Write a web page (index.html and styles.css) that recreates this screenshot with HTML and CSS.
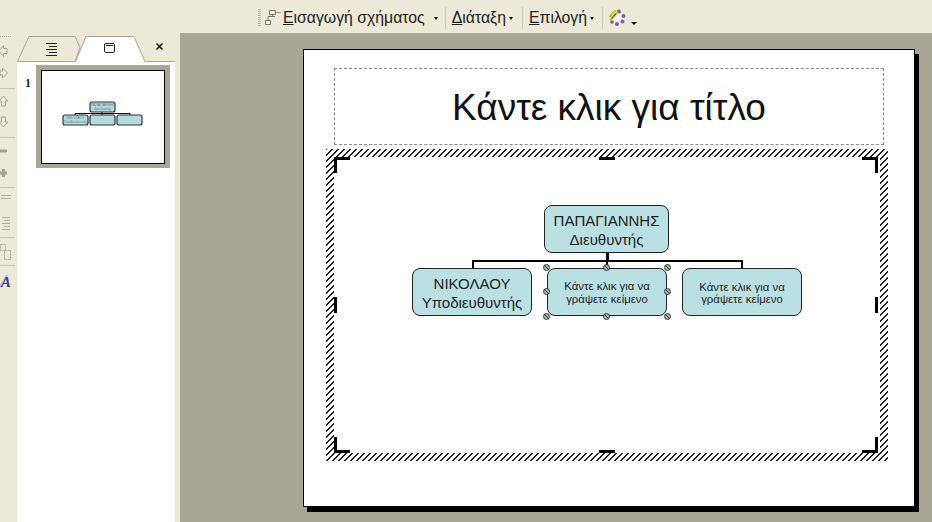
FILE: index.html
```html
<!DOCTYPE html>
<html lang="el">
<head>
    <meta charset="UTF-8">
    <title>Οργανόγραμμα</title>
    <link rel="stylesheet" href="styles.css">
</head>
<body>
    <div class="toolbar">
        <span class="grip"></span>
        <svg class="tb-icon" width="16" height="18" viewBox="0 0 16 18">
            <path d="M4.500 1.500h6v4h-6zM0.500 11.500h5v4h-5zM7.500 5.500v2M3 11V7.500h7" fill="#f4f2e6" stroke="#77756a"/>
            <path d="M11 3.500h5" stroke="#9a9888"/>
        </svg>
        <span class="tb-item wide"><u>Ε</u>ισαγωγή σχήματος<i class="caret far"></i></span>
        <span class="tb-sep"></span>
        <span class="tb-item arrange"><u>Δ</u>ιάταξη<i class="caret"></i></span>
        <span class="tb-sep"></span>
        <span class="tb-item"><u>Ε</u>πιλογή<i class="caret"></i></span>
        <span class="tb-sep"></span>
        <svg class="tb-icon cycle" width="18" height="18" viewBox="0 0 18 18">
            <circle cx="9.500" cy="8.500" r="6.500" fill="#f3f1f6"/>
            <g fill="#7d5f92">
                <circle cx="11" cy="2.500" r="2"/>
                <circle cx="15.500" cy="7" r="2"/>
                <circle cx="14.500" cy="12.500" r="2"/>
                <circle cx="9" cy="15" r="2"/>
                <circle cx="4" cy="13" r="1.800"/>
            </g>
            <path d="M1.500 8l6-6.500M2 11.500l7.500-8" stroke="#c9bf2e" stroke-width="2"/>
            <path d="M3.500 9.500l4.500-5" stroke="#4f7548" stroke-width="1.200"/>
        </svg>
        <i class="caret low"></i>
    </div>

    <div class="main">
        <svg class="side-tools" width="17" height="489" viewBox="0 33 17 489">
            <path d="M0 36.500h12" stroke="#a9a695" stroke-dasharray="1 1"/>
            <g fill="#ece9d8" stroke="#a5a294">
                <path d="M-1 51l4.500-5.500v3h3.500v5h-3.500v3z"/>
                <path d="M0 71h2.500v-3l5 5-5 5v-3H0z"/>
                <path d="M3.500 96l4.500 5H5.500v5h-4v-5H-1z"/>
                <path d="M1.500 117h4v5H8l-4.500 5-4.500-5h2.500z"/>
            </g>
            <path d="M0 88.500h15M0 137.500h15M0 187.500h15M0 237.500h15M0 265.500h15" stroke="#c5c2b2"/>
            <path d="M0 151h7" stroke="#a5a294" stroke-width="3"/>
            <path d="M0 173h7M3.500 169v8" stroke="#a5a294" stroke-width="3"/>
            <path d="M1 195.500h10M1 198.500h10M2 217.500h8M4 220.500h6M2 223.500h8M4 226.500h6M2 229.500h8" stroke="#b0ad9e"/>
            <path d="M0.500 244.500h5v6h-5zM4.500 250.500h6v9h-6z" fill="#ece9d8" stroke="#a5a294" stroke-dasharray="2 1"/>
            <path d="M-1 288L7 275" stroke="#b7c0dc" stroke-width="2"/>
            <text class="side-a" x="1" y="287">A</text>
        </svg>

        <div class="panel">
            <svg class="tabs" width="158" height="29" viewBox="17 33 158 29">
                <path d="M17.500 61.500L29 36.500h46l5 11-5 14z" fill="#ece9d8" stroke="#a9a695"/>
                <path d="M76 62L86 36.500h48l11 25.500z" fill="#fff"/>
                <path d="M75.500 61.500L86 36.500h48l11 25h30" fill="none" stroke="#a9a695"/>
                <path d="M46 43.500h11M49 46.500h8M46 49.500h11M49 52.500h8M46 55.500h11" stroke="#222"/>
                <rect x="104.500" y="43.500" width="10" height="9" rx="1.500" fill="#fff" stroke="#222"/>
                <path d="M106 45.500h7" stroke="#222"/>
                <path d="M156.500 43.500l6 6M162.500 43.500l-6 6" stroke="#111" stroke-width="1.500"/>
            </svg>
            <div class="thumb-row">
                <span class="thumb-num">1</span>
                <div class="thumb">
                    <svg class="thumb-svg" width="122" height="92" viewBox="0 0 122 92">
                        <path d="M33 44.500v-2h55v2M60 40v4" fill="none" stroke="#111"/>
                        <g fill="#b5dade" stroke="#333" stroke-width="1.200">
                            <rect x="48" y="31" width="25" height="10" rx="2"/>
                            <rect x="21" y="44" width="25" height="10" rx="2"/>
                            <rect x="48" y="44" width="25" height="10" rx="2"/>
                            <rect x="75" y="44" width="25" height="10" rx="2"/>
                        </g>
                        <text class="thumb-text" x="60.500" y="35">ΠΑΠΑΓΙΑΝΝΗΣ</text>
                        <text class="thumb-text" x="60.500" y="39">Διευθυντής</text>
                        <text class="thumb-text" x="33.500" y="48">ΝΙΚΟΛΑΟΥ</text>
                        <text class="thumb-text" x="33.500" y="52">Υποδιευθυντής</text>
                    </svg>
                </div>
            </div>
        </div>

        <div class="workspace">
            <div class="slide">
                <div class="title-box">Κάντε κλικ για τίτλο</div>
                <div class="frame">
                    <div class="frame-inner">
                        <i class="corner tl"></i><i class="corner tr"></i>
                        <i class="corner bl"></i><i class="corner br"></i>
                        <i class="mark top"></i><i class="mark bottom"></i>
                        <i class="mark left"></i><i class="mark right"></i>

                        <i class="line trunk"></i>
                        <i class="line bus"></i>
                        <i class="line drop d1"></i>
                        <i class="line drop d2"></i>
                        <i class="line drop d3"></i>

                        <div class="node n-top">ΠΑΠΑΓΙΑΝΝΗΣ<br>Διευθυντής</div>
                        <div class="node n-left">ΝΙΚΟΛΑΟΥ<br>Υποδιευθυντής</div>
                        <div class="node n-mid small">Κάντε κλικ για να<br>γράψετε κείμενο
                            <i class="dot h1"></i><i class="dot h2"></i><i class="dot h3"></i><i class="dot h4"></i>
                            <i class="dot h5"></i><i class="dot h6"></i><i class="dot h7"></i><i class="dot h8"></i>
                        </div>
                        <div class="node n-right small">Κάντε κλικ για να<br>γράψετε κείμενο</div>
                    </div>
                </div>
            </div>
        </div>
    </div>
</body>
</html>
```

FILE: styles.css
```css
html, body {
    margin: 0;
    height: 100%;
    overflow: hidden;
}

body {
    background-color: #ece9d8;
    font-family: 'Liberation Sans', sans-serif;
    color: #222;
}

.toolbar {
    height: 33px;
    box-sizing: border-box;
    padding: 7px 0 4px 258px;
    display: flex;
    align-items: center;
    font-size: 15.800px;
}

.grip {
    width: 3px;
    height: 18px;
    margin-right: 4px;
    background: repeating-linear-gradient(#b5b2a3 0 1px, transparent 1px 2px);
}

.tb-icon {
    flex: none;
}

.tb-item {
    display: flex;
    align-items: center;
    white-space: nowrap;
    margin-left: 6px;
    margin-right: 8px;
}

.tb-item.wide {
    margin-left: 2px;
    margin-right: 7px;
}

.tb-item.arrange {
    margin-right: 9px;
}

.tb-sep {
    width: 1px;
    height: 22px;
    background-color: #cfccbc;
}

.caret {
    width: 0;
    height: 0;
    margin-left: 3px;
    border: 2.500px solid transparent;
    border-top: 3px solid #111;
    border-bottom: 0;
}

.caret.far {
    margin-left: 9px;
}

.caret.low {
    margin: 10px 0 0 5px;
    border-width: 3px 3px 0;
}

.cycle {
    margin-left: 5px;
}

.main {
    display: flex;
    height: 489px;
}

.side-tools {
    flex: none;
    display: block;
}

.side-a {
    font-family: 'Liberation Serif', serif;
    font-size: 15px;
    font-weight: bold;
    font-style: italic;
    fill: #3a3f8f;
}

.panel {
    flex: none;
    width: 158px;
    margin-right: 5px;
    background-color: #fff;
}

.tabs {
    display: block;
    background-color: #ece9d8;
}

.thumb-row {
    display: flex;
    padding: 3px 0 0 8px;
}

.thumb-num {
    width: 11px;
    margin-top: 11px;
    font-family: 'Liberation Serif', serif;
    font-size: 12px;
    font-weight: bold;
}

.thumb {
    width: 124px;
    height: 93px;
    border: 5px solid #a9a695;
}

.thumb-svg {
    display: block;
    border: 1px solid #000;
    background-color: #fff;
}

.thumb-text {
    font-size: 3.500px;
    fill: #5a7d84;
    text-anchor: middle;
}

.workspace {
    flex: 1;
    background-color: #a9a695;
    padding: 16px 0 0 123px;
}

.slide {
    position: relative;
    width: 610px;
    height: 456px;
    border: 1px solid #000;
    background-color: #fff;
    box-shadow: 4px 5px 0 #000;
}

.title-box {
    position: absolute;
    left: 30px;
    top: 18px;
    width: 548px;
    height: 72px;
    padding-top: 3px;
    border: 1px dashed #8a8a8a;
    display: flex;
    align-items: center;
    justify-content: center;
    font-size: 37px;
    color: #111;
}

.frame {
    position: absolute;
    left: 22px;
    top: 99px;
    width: 562px;
    height: 312px;
    box-sizing: border-box;
    padding: 8px;
    background-image: linear-gradient(135deg, #222 0 14%, #fff 14% 50%, #222 50% 64%, #fff 64%);
    background-size: 6px 6px;
}

.frame-inner {
    position: relative;
    height: 100%;
    background-color: #fff;
}

.corner {
    position: absolute;
    width: 16px;
    height: 16px;
    box-sizing: border-box;
    border: 0 solid #000;
}

.corner.tl { left: 0; top: 0; border-width: 3px 0 0 3px; }
.corner.tr { right: 2px; top: 0; border-width: 3px 3px 0 0; }
.corner.bl { left: 0; bottom: 0; border-width: 0 0 3px 3px; }
.corner.br { right: 2px; bottom: 0; border-width: 0 3px 3px 0; }

.mark {
    position: absolute;
    background-color: #000;
}

.mark.top { left: 265px; top: 0; width: 16px; height: 3px; }
.mark.bottom { left: 265px; bottom: 0; width: 16px; height: 3px; }
.mark.left { left: 0; top: 140px; width: 3px; height: 16px; }
.mark.right { right: 2px; top: 140px; width: 3px; height: 16px; }

.line {
    position: absolute;
    background-color: #000;
}

.trunk { left: 272px; top: 96px; width: 3px; height: 9px; }
.bus { left: 138px; top: 103px; width: 271px; height: 2px; }
.drop { top: 103px; width: 2px; height: 9px; }
.d1 { left: 138px; }
.d2 { left: 272px; }
.d3 { left: 407px; }

.node {
    position: absolute;
    top: 111px;
    width: 120px;
    height: 48px;
    box-sizing: border-box;
    padding-top: 2px;
    border: 1px solid #222;
    border-radius: 8px;
    background-color: #bbe0e3;
    display: flex;
    align-items: center;
    justify-content: center;
    text-align: center;
    font-size: 15px;
    line-height: 19px;
    white-space: nowrap;
}

.node.small {
    font-size: 11.400px;
    line-height: 12.500px;
}

.n-top { left: 210px; top: 48px; width: 125px; }
.n-left { left: 78px; }
.n-mid { left: 213px; }
.n-right { left: 348px; }

.n-mid {
    display: block;
    padding-top: 11px;
}

.dot {
    position: absolute;
    width: 5px;
    height: 5px;
    border: 1px solid #333;
    border-radius: 50%;
    background: linear-gradient(45deg, #a9b3a8 45%, #333 45% 55%, #a9b3a8 55%);
}

.h1 { left: -5px; top: -5px; }
.h2 { left: 55px; top: -5px; }
.h3 { right: -5px; top: -5px; }
.h4 { left: -5px; top: 19px; }
.h5 { right: -5px; top: 19px; }
.h6 { left: -5px; bottom: -5px; }
.h7 { left: 55px; bottom: -5px; }
.h8 { right: -5px; bottom: -5px; }
```
